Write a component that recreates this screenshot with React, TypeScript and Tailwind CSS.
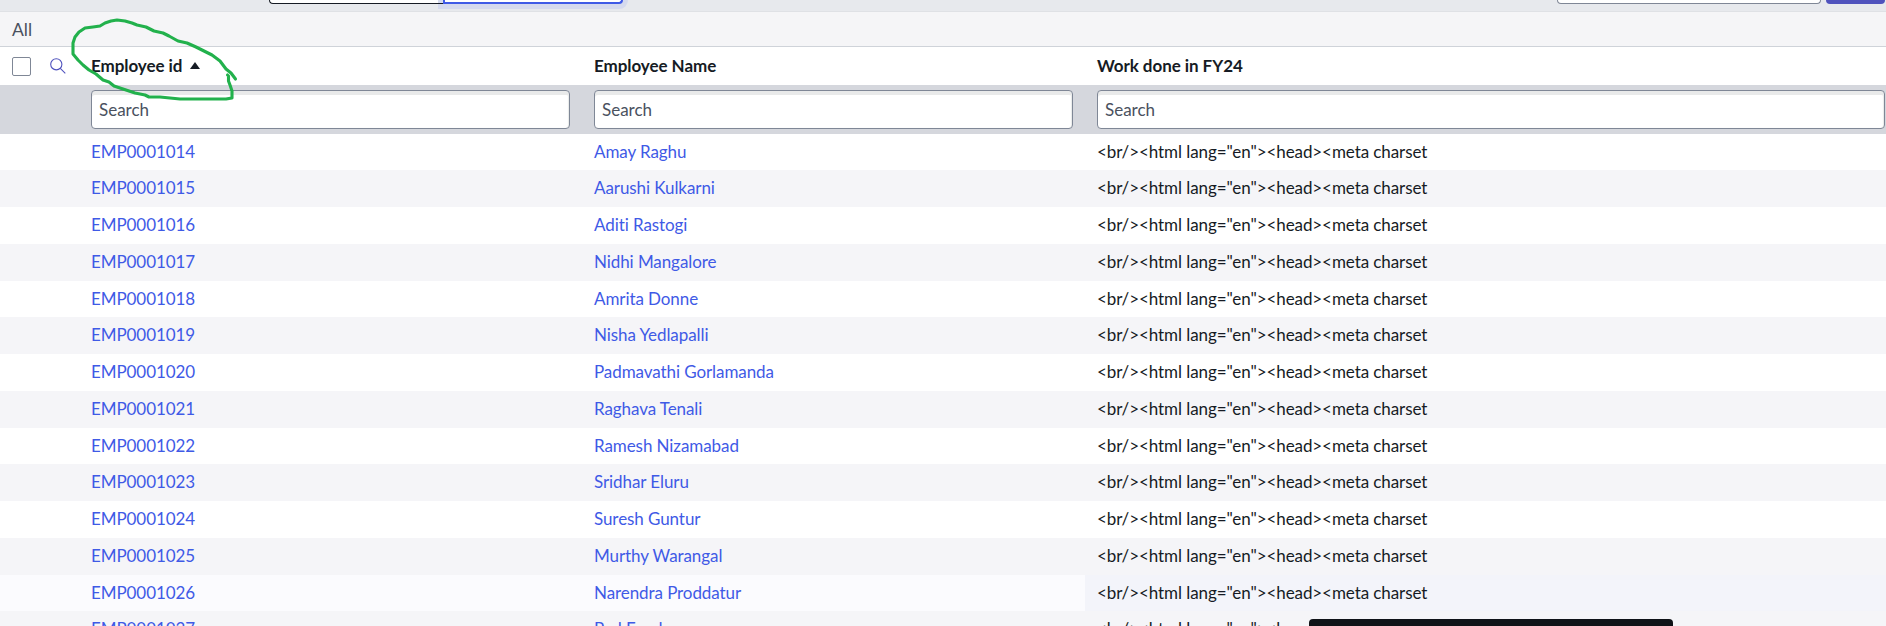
const rows: [string, string][] = [
  ["EMP0001014", "Amay Raghu"],
  ["EMP0001015", "Aarushi Kulkarni"],
  ["EMP0001016", "Aditi Rastogi"],
  ["EMP0001017", "Nidhi Mangalore"],
  ["EMP0001018", "Amrita Donne"],
  ["EMP0001019", "Nisha Yedlapalli"],
  ["EMP0001020", "Padmavathi Gorlamanda"],
  ["EMP0001021", "Raghava Tenali"],
  ["EMP0001022", "Ramesh Nizamabad"],
  ["EMP0001023", "Sridhar Eluru"],
  ["EMP0001024", "Suresh Guntur"],
  ["EMP0001025", "Murthy Warangal"],
  ["EMP0001026", "Narendra Proddatur"],
  ["EMP0001027", "Pad Eeedu"],
];

const work = '<br/><html lang="en"><head><meta charset';
const HOVERED = 12;
const columns = "grid grid-cols-[91px_503px_503px_789px]";

function SearchField({ className }: { className: string }) {
  return (
    <div className={`h-[39px] rounded-[4px] border border-[#7f8796] bg-white pl-[7px] leading-[37px] text-[#4a515e] shadow-[inset_0_4px_0_#e9eaea,inset_-1px_0_1px_#e8eae9] ${className}`}>
      Search
    </div>
  );
}

function TopBar() {
  return (
    <div className="flex h-3 items-start border-b border-[#dfe1e5] bg-[#e7e9ed]">
      <div className="relative z-10 ml-[269px] h-1 w-[174px] rounded-bl-[4px] border-b border-l border-[#161b24] bg-[linear-gradient(90deg,#fff_168px,#d5daee_168px)]" />
      <div className="h-1 w-[180px] rounded-br-[4px] border-2 border-t-0 border-[#3f5ae6] bg-white shadow-[0_0_0_5px_#d5daee]" />
      <div className="ml-auto h-1 w-[264px] rounded-b-[4px] border border-t-0 border-[#7f8796] bg-white" />
      <div className="mr-px ml-[5px] h-1 w-[59px] rounded-b-[4px] bg-[#4f52bd]" />
    </div>
  );
}

export default function App() {
  return (
    <div className="relative h-[626px] w-[1886px] overflow-hidden bg-white font-['Lato',sans-serif] text-[17px] text-[#161b24] [font-variant-ligatures:none]">
      <TopBar />
      <div className="h-[35px] border-b border-[#cfd3d9] bg-[#f5f5f7] pl-3 text-[17.5px] leading-[35px] text-[#4a515e]">All</div>
      <div className={`${columns} h-[38px] items-center font-bold tracking-[-0.06px]`}>
        <div className="flex items-center pl-3">
          <div className="size-[19px] rounded-[2px] border border-[#7f8796] bg-white" />
          <svg className="ml-[19px]" width="16" height="16" viewBox="0 0 16 16" fill="none" stroke="#4f52bd" strokeWidth="1.1">
            <circle cx="6.3" cy="6.3" r="5.6" />
            <path d="M10.3 10.3 15.3 15.3" />
          </svg>
        </div>
        <div className="flex items-center pb-px">
          Employee id
          <svg className="ml-2" width="10" height="7" viewBox="0 0 10 7" fill="#161b24"><path d="M0 7 5 0 10 7Z" /></svg>
        </div>
        <div className="pb-px">Employee Name</div>
        <div className="pb-px">Work done in FY24</div>
      </div>
      <div className={`${columns} h-[49px] bg-[#d5d7dd] pt-[5px]`}>
        <div />
        <SearchField className="w-[479px]" />
        <SearchField className="w-[479px]" />
        <SearchField className="w-[788px]" />
      </div>
      <div className="-mt-[0.4px]">
        {rows.map(([id, name], i) => (
          <div key={id} className={`${columns} h-[36.75px] leading-[35px] tracking-[-0.08px] ${i === HOVERED ? "bg-[linear-gradient(90deg,#fbfbfe_1085px,#f3f4fa_1085px)]" : i % 2 ? "bg-[#f5f5f8]" : "bg-white"}`}>
            <div />
            <div className="text-[#3f5ae6]">{id}</div>
            <div className="text-[#3f5ae6]">{name}</div>
            <div>{work}</div>
          </div>
        ))}
      </div>
      <div className="absolute top-[619px] left-[1309px] h-4 w-[364px] rounded-[4px] bg-[#0f1217]" />
      <svg className="absolute top-0 left-0" width="260" height="120" fill="none" stroke="#22b14c" strokeWidth="3.1" strokeLinecap="round" strokeLinejoin="round">
        <path d="M235.5 79 231 73 226 69 220 61 212 55 204 51 196 47 187 43 178 41 169 36 163 33 154 31 146 27 137 25 132 23 125 21 117 20 111 21 105 23 100 26 93 27 85 28 79 32 75 37 73 43 73 54 78 60 83 65 89 70 96 74 103 80 109 82 114 86 120 88 126 90 135 93 145 95 149 97 160 97 170 98 180 99 226 99 232 98 232 91 230 85 228.500 81 228.500 76 227.500 75" />
      </svg>
    </div>
  );
}
